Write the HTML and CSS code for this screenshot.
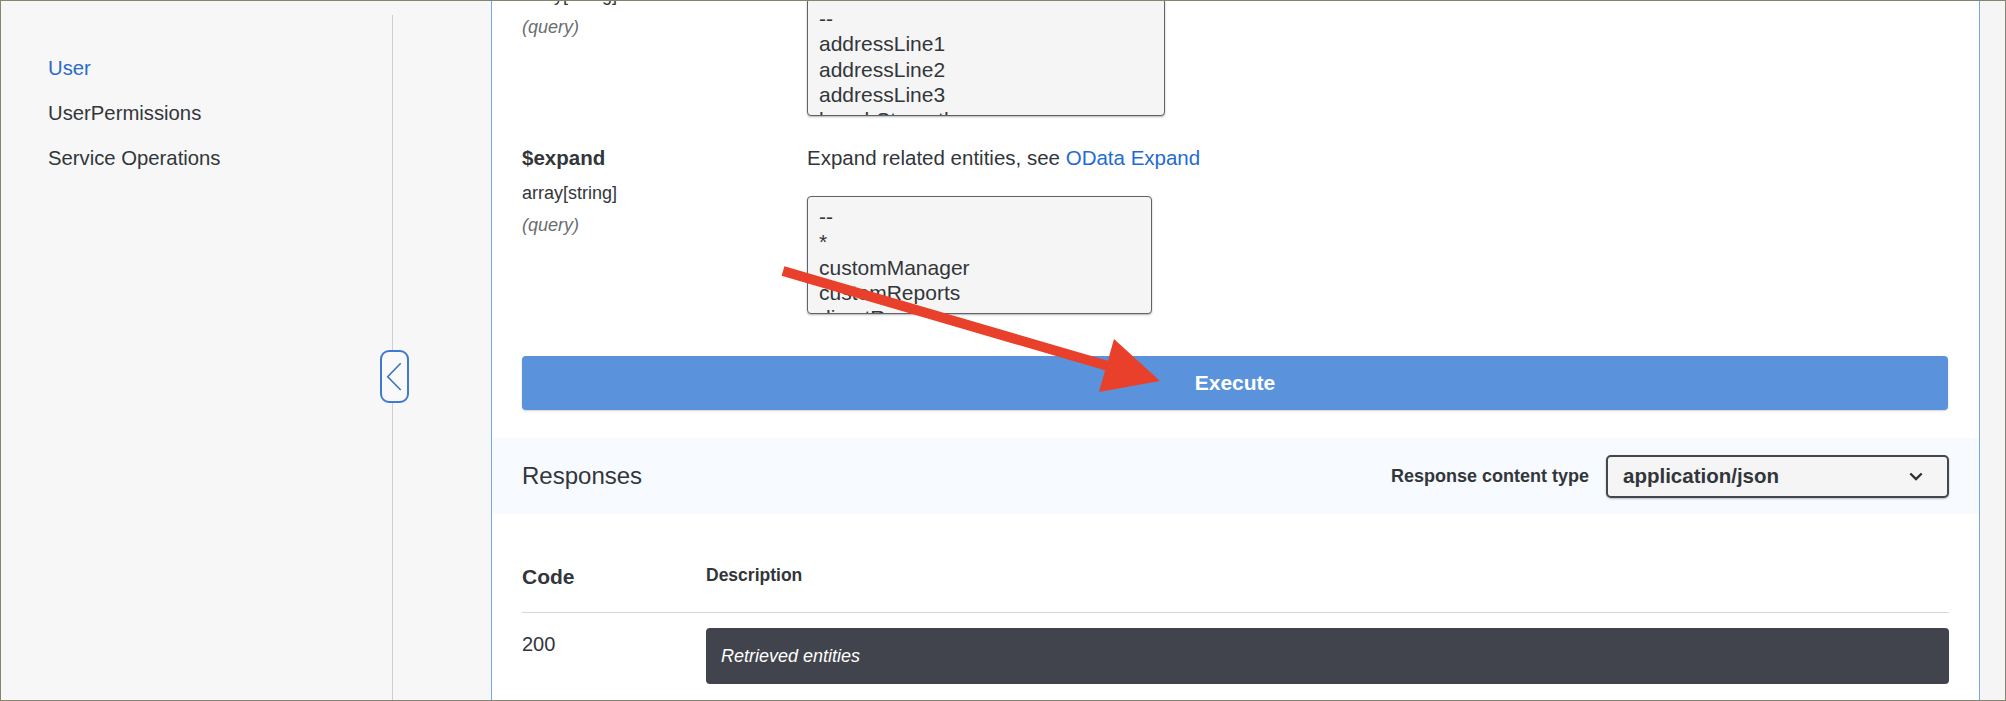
FILE: index.html
```html
<!DOCTYPE html>
<html lang="en">
<head>
<meta charset="utf-8">
<title>API Explorer - User</title>
<link rel="stylesheet" href="styles.css">
</head>
<body>
<div class="frame">
  <aside class="sidebar">
    <nav class="nav">
      <a class="nav-item active">User</a>
      <a class="nav-item">UserPermissions</a>
      <a class="nav-item">Service Operations</a>
    </nav>
    <button class="collapse" aria-label="Collapse">
      <svg width="25" height="49" viewBox="0 0 25 49"><path d="M18.7 11.3 L5.7 24.7 L18.7 38" fill="none" stroke="#3d72c0" stroke-width="1.6"/></svg>
    </button>
  </aside>

  <main class="card">
    <div class="card-inner">
      <div class="param">
        <div class="param-name">
          <div class="pname">$select</div>
          <div class="ptype">array[string]</div>
          <div class="pin">(query)</div>
        </div>
        <div class="param-desc">
          <div class="pdesc">Select properties to be returned, see <a class="link">OData Select</a></div>
          <div class="listbox wide">
            <div>--</div>
            <div>addressLine1</div>
            <div>addressLine2</div>
            <div>addressLine3</div>
            <div>benchStrength</div>
          </div>
        </div>
      </div>

      <div class="param">
        <div class="param-name">
          <div class="pname">$expand</div>
          <div class="ptype">array[string]</div>
          <div class="pin">(query)</div>
        </div>
        <div class="param-desc">
          <div class="pdesc">Expand related entities, see <a class="link">OData Expand</a></div>
          <div class="listbox">
            <div>--</div>
            <div>*</div>
            <div>customManager</div>
            <div>customReports</div>
            <div>directReports</div>
          </div>
        </div>
      </div>

      <button class="execute">Execute</button>

      <div class="responses-bar">
        <div class="responses-title">Responses</div>
        <div class="ctype">
          <span class="ctype-label">Response content type</span>
          <div class="ctype-select">
            <span>application/json</span>
            <svg width="14" height="9" viewBox="0 0 14 9"><path d="M1.3 1.5 L7 7 L12.7 1.5" fill="none" stroke="#2d3035" stroke-width="2.4"/></svg>
          </div>
        </div>
      </div>

      <div class="resp-table">
        <div class="resp-head">
          <div class="col-code">Code</div>
          <div class="col-desc">Description</div>
        </div>
        <div class="resp-row">
          <div class="code">200</div>
          <div class="resp-desc">Retrieved entities</div>
        </div>
      </div>
    </div>
  </main>

  <div class="rightstrip"></div>
</div>

<svg class="arrow" width="2006" height="701" viewBox="0 0 2006 701">
  <line x1="783" y1="271" x2="1108" y2="366" stroke="#e8402a" stroke-width="10"/>
  <polygon points="1114,339 1099,392 1160,381" fill="#e8402a"/>
</svg>
</body>
</html>
```

FILE: styles.css
```css
* { box-sizing: border-box; }

html, body {
  margin: 0;
  padding: 0;
  background: #ffffff;
}

body {
  font-family: "Liberation Sans", Arial, Helvetica, sans-serif;
  color: #32363a;
  width: 2006px;
  height: 701px;
  overflow: hidden;
  position: relative;
}

.frame {
  width: 2006px;
  height: 701px;
  border: 1px solid #85856d;
  display: flex;
  overflow: hidden;
  background: #f7f7f7;
}

/* Sidebar */
.sidebar {
  flex: none;
  width: 490px;
  height: 100%;
  position: relative;
  background: #f7f7f7;
}

.nav {
  width: 392px;
  height: calc(100% - 14px);
  margin-top: 14px;
  border-right: 1px solid #cfcfcf;
  padding: 41px 0 0 47px;
  display: flex;
  flex-direction: column;
  gap: 21px;
}

.nav-item {
  font-size: 20.3px;
  line-height: 24px;
  color: #32363a;
  text-decoration: none;
}

.nav-item.active {
  color: #2a6bc8;
}

.collapse {
  position: absolute;
  left: 379px;
  top: 349px;
  width: 29px;
  height: 53px;
  padding: 0;
  margin: 0;
  border: 2px solid #3f7ad2;
  border-radius: 9px;
  background: #f9f9f9;
  display: flex;
  align-items: center;
  justify-content: center;
}

.collapse svg { display: block; }

/* Content card */
.card {
  flex: none;
  width: 1489px;
  height: 100%;
  background: #ffffff;
  border-left: 1px solid #74a8ee;
  border-right: 1px solid #74a8ee;
  overflow: hidden;
}

.card-inner {
  margin-top: -68px;
}

.param {
  display: grid;
  grid-template-columns: 285px 1fr;
  padding: 15px 0 15px 30px;
}

.pname {
  font-size: 20.5px;
  line-height: 24px;
  font-weight: bold;
  color: #32363a;
}

.ptype {
  font-size: 18px;
  line-height: 22px;
  margin-top: 12px;
  color: #32363a;
}

.pin {
  font-size: 18px;
  line-height: 22px;
  margin-top: 10px;
  font-style: italic;
  color: #6a6d70;
}

.pdesc {
  font-size: 20.5px;
  line-height: 24px;
  color: #32363a;
}

.link {
  color: #1f6ccf;
  text-decoration: none;
}

.listbox {
  margin-top: 26px;
  width: 345px;
  height: 118px;
  border: 1px solid #5f6267;
  border-radius: 4px;
  background: #f5f5f5;
  box-shadow: 0 1px 2px rgba(0, 0, 0, 0.3);
  padding: 7px 11px;
  overflow: hidden;
  font-size: 21px;
  line-height: 25.3px;
  color: #32363a;
}

.listbox.wide { width: 358px; }

/* Execute */
.execute {
  display: block;
  margin: 27px 0 0 30px;
  width: 1426px;
  height: 54px;
  border: none;
  border-radius: 4px;
  background: #5a93dc;
  box-shadow: 0 1px 2px rgba(0, 0, 0, 0.18);
  color: #ffffff;
  font-family: "Liberation Sans", Arial, Helvetica, sans-serif;
  font-size: 21px;
  font-weight: bold;
  padding: 0;
}

/* Responses bar */
.responses-bar {
  margin-top: 28px;
  height: 76px;
  background: #f7fafe;
  display: flex;
  align-items: center;
  justify-content: space-between;
  padding: 0 30px;
}

.responses-title {
  font-size: 24px;
  color: #32363a;
}

.ctype {
  display: flex;
  align-items: center;
  gap: 17px;
}

.ctype-label {
  font-size: 18px;
  font-weight: bold;
  color: #32363a;
}

.ctype-select {
  width: 343px;
  height: 43px;
  border: 2px solid #44474d;
  border-radius: 5px;
  background: #f5f5f5;
  box-shadow: 0 1px 2px rgba(0, 0, 0, 0.25);
  display: flex;
  align-items: center;
  justify-content: space-between;
  padding: 0 24px 0 15px;
  font-size: 20.5px;
  font-weight: bold;
  color: #32363a;
}

.ctype-select svg { display: block; }

/* Responses table */
.resp-table {
  padding: 0 30px;
}

.resp-head {
  display: grid;
  grid-template-columns: 184px 1fr;
  align-items: center;
  padding: 49px 0 21px;
  border-bottom: 1px solid #d7d7d7;
}

.col-code {
  font-size: 21px;
  line-height: 24px;
  font-weight: bold;
}

.col-desc {
  font-size: 17.5px;
  line-height: 24px;
  font-weight: bold;
  padding-bottom: 4px;
}

.resp-row {
  display: grid;
  grid-template-columns: 184px 1fr;
  align-items: start;
}

.code {
  padding-top: 19px;
  font-size: 20px;
  line-height: 24px;
}

.resp-desc {
  margin-top: 15px;
  height: 56px;
  border-radius: 4px;
  background: #41444c;
  color: #ffffff;
  font-style: italic;
  font-size: 18px;
  display: flex;
  align-items: center;
  padding-left: 15px;
}

.rightstrip {
  flex: 1;
  height: 100%;
  background: #f5f5f5;
}

.arrow {
  position: absolute;
  left: 0;
  top: 0;
  pointer-events: none;
}
```
